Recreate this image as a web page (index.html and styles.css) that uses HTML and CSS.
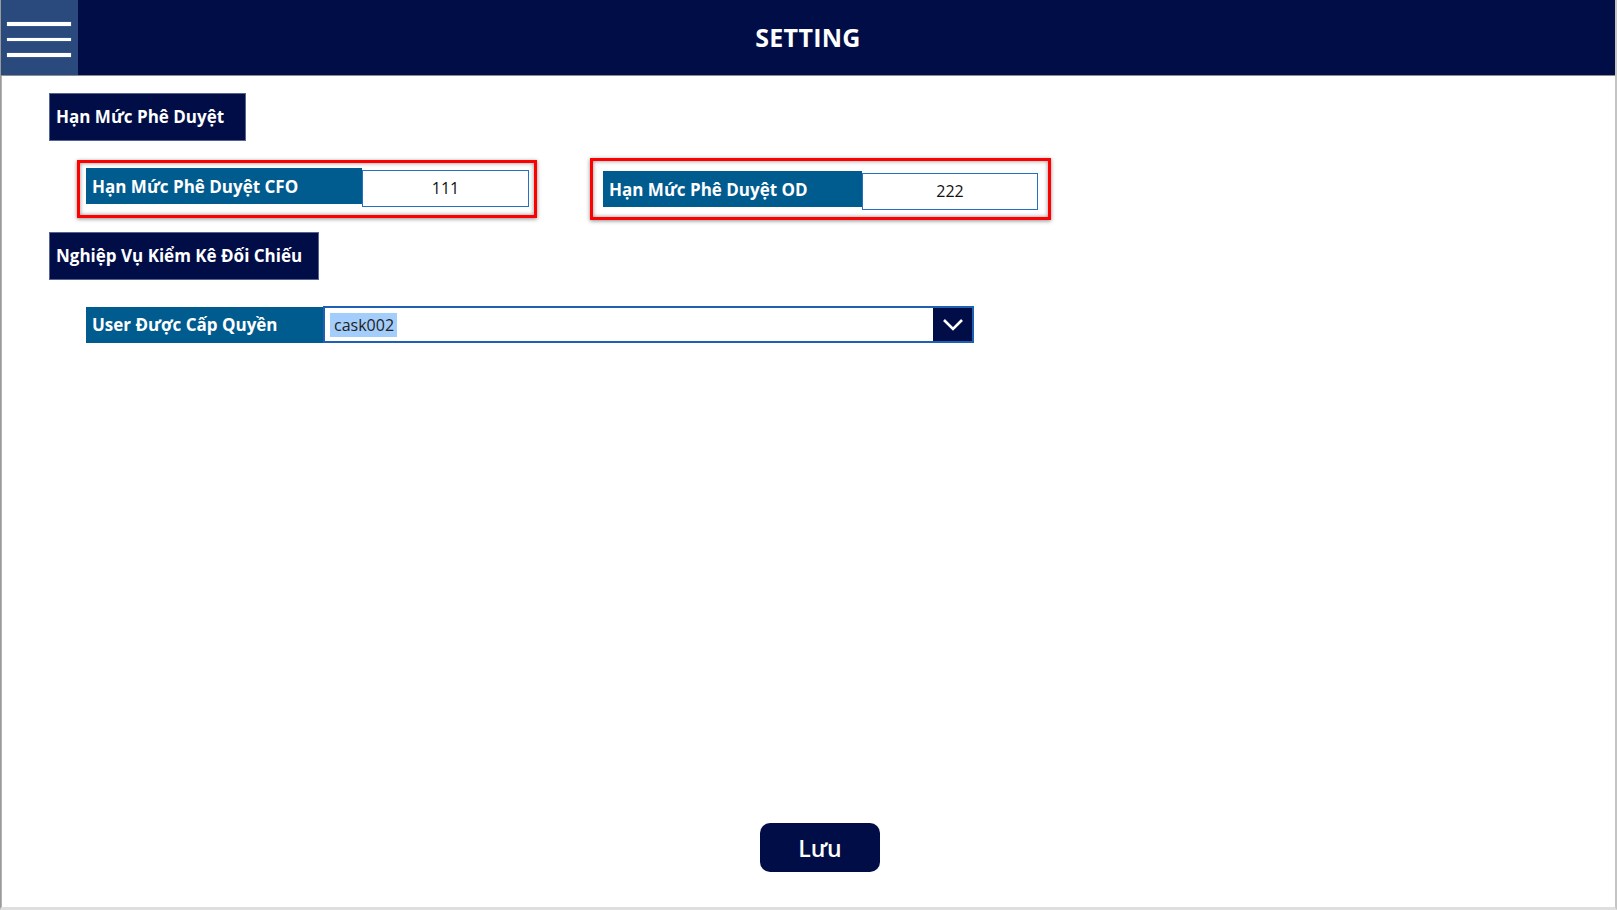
FILE: index.html
```html
<!DOCTYPE html>
<html lang="vi">
<head>
<meta charset="utf-8">
<title>Setting</title>
<link rel="stylesheet" href="styles.css">
</head>
<body>
<div class="app">
  <header class="topbar">
    <div class="menu-btn">
      <span class="bar"></span>
      <span class="bar"></span>
      <span class="bar"></span>
    </div>
    <h1 class="title">SETTING</h1>
    <div class="spacer"></div>
  </header>
  <main class="content">
    <div class="section-title section-one">Hạn Mức Phê Duyệt</div>
    <div class="limit-row">
      <div class="field-box cfo">
        <div class="field-label">Hạn Mức Phê Duyệt CFO</div>
        <div class="field-input">111</div>
      </div>
      <div class="field-box od">
        <div class="field-label">Hạn Mức Phê Duyệt OD</div>
        <div class="field-input">222</div>
      </div>
    </div>
    <div class="section-title section-two">Nghiệp Vụ Kiểm Kê Đối Chiếu</div>
    <div class="user-row">
      <div class="field-label user-label">User Được Cấp Quyền</div>
      <div class="dropdown">
        <span class="selected">cask002</span>
        <span class="chevron">
          <svg width="22" height="14" viewBox="0 0 22 14"><path d="M2 2 L11 11 L20 2" fill="none" stroke="#ffffff" stroke-width="2.6"/></svg>
        </span>
      </div>
    </div>
    <div class="grow"></div>
    <div class="actions">
      <button class="save-btn">Lưu</button>
    </div>
  </main>
</div>
</body>
</html>
```
FILE: styles.css
```css
* { box-sizing: border-box; }
html, body { margin: 0; padding: 0; background: #ffffff; }
body { font-family: "Open Sans", "Noto Sans", "Liberation Sans", sans-serif; }

.app {
  width: 1617px;
  height: 910px;
  display: flex;
  flex-direction: column;
  border-left: 1px solid #9a9a9a;
  border-right: 2px solid #c4c4c4;
  border-bottom: 3px solid #dedede;
}

.topbar {
  height: 76px;
  flex: none;
  display: grid;
  grid-template-columns: 77px 1fr 77px;
  background: #000d47;
  border-bottom: 1px solid #8d8d8d;
}

.menu-btn {
  background: #2a4a7e;
  display: flex;
  flex-direction: column;
  gap: 12px;
  padding: 22px 0 0 6px;
}
.menu-btn .bar {
  display: block;
  width: 64px;
  height: 3.6px;
  background: #ffffff;
  box-shadow: 0 0 1px #a9c4ff;
}

.title {
  margin: 0;
  text-align: center;
  color: #ffffff;
  font-size: 25px;
  font-weight: 700;
  line-height: 74px;
  letter-spacing: 0.3px;
}

.content {
  flex: 1;
  display: flex;
  flex-direction: column;
  border-left: 1px solid #b3b3b3;
  padding: 17px 0 0 47px;
}

.section-title {
  align-self: flex-start;
  background: #000d47;
  color: #ffffff;
  font-weight: 700;
  font-size: 17px;
  height: 48px;
  line-height: 46px;
  padding: 0 0 0 6px;
  border: 1px solid #56658f;
  white-space: nowrap;
}
.section-one { width: 197px; }

.limit-row {
  display: flex;
  align-items: flex-start;
  gap: 53px;
  margin: 19px 0 0 28px;
}

.field-box {
  display: flex;
  align-items: flex-start;
  border: 3px solid #ff0000;
  box-shadow: 0 1px 4px rgba(0,0,0,0.45), inset 0 0 4px rgba(0,0,0,0.45);
}
.field-box.cfo { padding: 5px 5px 8px 6px; }
.field-box.cfo .field-label { width: 276px; }
.field-box.cfo .field-input { width: 167px; margin-top: 2px; }
.field-box.od { padding: 10px 10px 7px 10px; margin-top: -2px; }
.field-box.od .field-label { width: 259px; }
.field-box.od .field-input { width: 176px; margin-top: 2px; }

.field-label {
  height: 36px;
  background: #005b8f;
  color: #ffffff;
  font-weight: 700;
  font-size: 17px;
  line-height: 37px;
  padding-left: 6px;
  white-space: nowrap;
  overflow: hidden;
}

.field-input {
  height: 37px;
  border: 1px solid #2470c2;
  background: #ffffff;
  color: #111111;
  font-size: 16px;
  line-height: 35px;
  text-align: center;
}

.section-two { width: 270px; margin-top: 12px; }

.user-row {
  display: flex;
  align-items: flex-start;
  margin: 26px 0 0 37px;
}
.user-label { width: 237px; margin-top: 1px; padding-left: 6px; line-height: 36px; }

.dropdown {
  width: 651px;
  height: 37px;
  border: 2px solid #1f5fb4;
  display: flex;
  align-items: center;
  justify-content: space-between;
  background: #ffffff;
  padding-left: 5px;
}
.selected {
  background: #a3cdfa;
  color: #222222;
  font-size: 16px;
  line-height: 24px;
  padding: 0 3px 0 4px;
}
.chevron {
  width: 39px;
  height: 33px;
  background: #000d47;
  display: flex;
  align-items: center;
  justify-content: center;
}

.grow { flex: 1; }

.actions {
  display: flex;
  padding-left: 711px;
  margin-bottom: 35px;
}
.save-btn {
  width: 120px;
  height: 49px;
  border: none;
  border-radius: 10px;
  background: #000d47;
  color: #ffffff;
  font-family: "Open Sans", "Noto Sans", sans-serif;
  font-size: 23px;
  font-weight: 600;
  padding: 0;
}
```
